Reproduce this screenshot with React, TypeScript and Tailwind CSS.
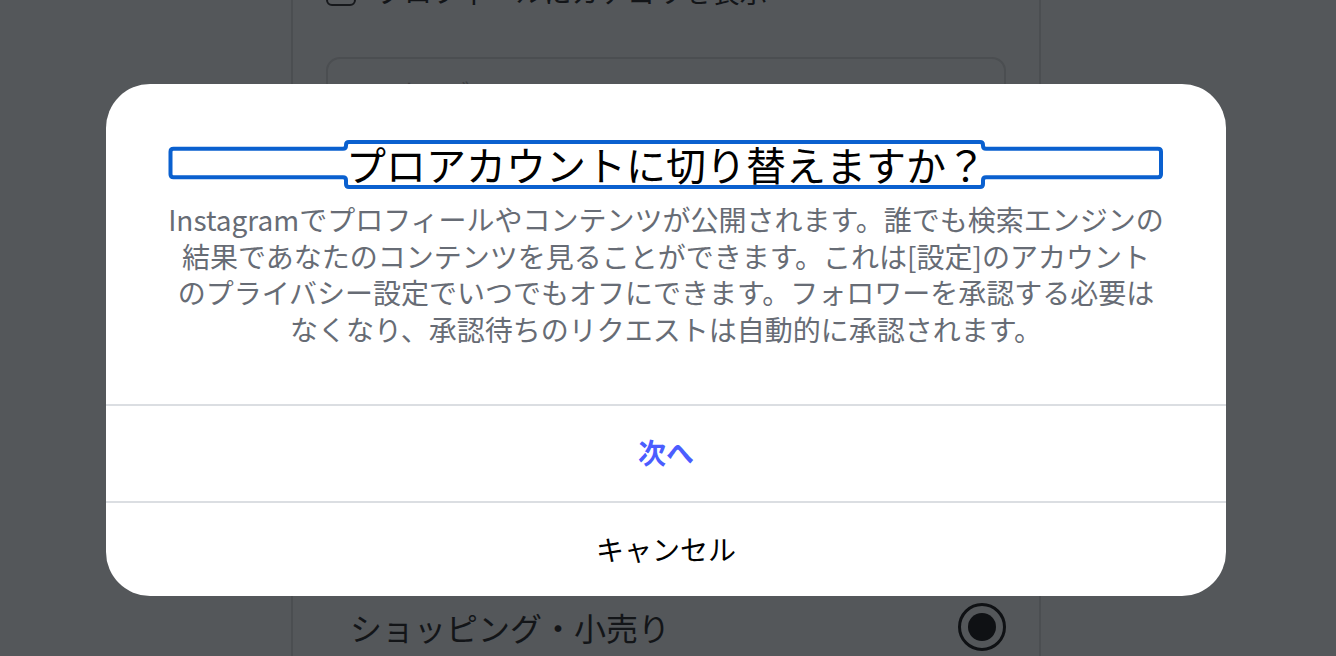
import React from "react";

const FONT = "font-['Noto_Sans_CJK_JP','Noto_Sans',sans-serif]";

function TitleOutline() {
  const d =
    "M 67.5 64.7 L 237 64.7 Q 240 64.7 240 61.7 L 240 61 Q 240 58 243 58 L 874 58 Q 877 58 877 61 L 877 61.7 Q 877 64.7 880 64.7 L 1052 64.7 Q 1055 64.7 1055 67.7 L 1055 90.3 Q 1055 93.3 1052 93.3 L 880 93.3 Q 877 93.3 877 96.3 L 877 100 Q 877 103 874 103 L 243 103 Q 240 103 240 100 L 240 96.3 Q 240 93.3 237 93.3 L 67.5 93.3 Q 64.5 93.3 64.5 90.3 L 64.5 67.7 Q 64.5 64.7 67.5 64.7 Z";
  return (
    <svg
      className="pointer-events-none absolute left-0 top-0"
      width="1120"
      height="160"
      viewBox="0 0 1120 160"
    >
      <path d={d} fill="none" stroke="#0a60cf" strokeWidth="4" />
    </svg>
  );
}

export default function App() {
  return (
    <div className={`relative h-[656px] w-full overflow-hidden bg-[#54575a] ${FONT}`}>
      {/* background page */}
      <div className="flex justify-center pr-[4px]">
        <div className="flex h-[656px] w-[750px] flex-col border-x-2 border-[#4b4e51] px-[33px]">
          <div className="-mt-[24px] flex h-[30px] items-center gap-[20px]">
            <div className="h-[30px] w-[30px] shrink-0 rounded-[6px] border-2 border-[#17191c]" />
            <span className="text-[28px] leading-[30px] text-[#131518]">
              プロフィールにカテゴリを表示
            </span>
          </div>
          <div className="mt-[51px] h-[503px] rounded-[14px] border-2 border-[#4b4e51] pl-[70px] pt-[18px]">
            <span className="text-[24px] leading-[30px] text-[#3d4043]">カテゴリ</span>
          </div>
          <div className="mt-[43px] flex h-[48px] items-center justify-between pl-[24px]">
            <span className="text-[32px] leading-[48px] text-[#131518]">
              ショッピング・小売り
            </span>
            <div className="flex h-[48px] w-[48px] items-center justify-center rounded-full border-[3px] border-[#0f1114]">
              <div className="h-[28px] w-[28px] rounded-full bg-[#0f1114]" />
            </div>
          </div>
        </div>
      </div>

      {/* modal */}
      <div className="absolute inset-0 flex justify-center pr-[4px] pt-[84px]">
        <div className="relative flex h-[512px] w-[1120px] flex-col rounded-[44px] bg-white">
          <TitleOutline />
          <div className="px-[64px] pt-[56px]">
            <h3 className="h-[48px] whitespace-nowrap text-center text-[40px] font-normal leading-[48px] text-[#000000]">
              プロアカウントに切り替えますか？
            </h3>
          </div>
          <p className="mt-[13px] px-[40px] text-center text-[28px] leading-[36.5px] text-[#676c75]">
            Instagramでプロフィールやコンテンツが公開されます。誰でも検索エンジンの
            <br />
            結果であなたのコンテンツを見ることができます。これは[設定]のアカウント
            <br />
            のプライバシー設定でいつでもオフにできます。フォロワーを承認する必要は
            <br />
            なくなり、承認待ちのリクエストは自動的に承認されます。
          </p>
          <div className="mt-auto flex h-[192px] flex-col">
            <button className="flex flex-1 items-center justify-center border-t-2 border-[#dbdee2] pb-[4px] text-[28px] font-bold text-[#4b5dff]">
              次へ
            </button>
            <button className="flex flex-1 items-center justify-center border-t-2 border-[#dbdee2] pb-[2px] text-[28px] font-normal text-[#000000]">
              キャンセル
            </button>
          </div>
        </div>
      </div>
    </div>
  );
}
